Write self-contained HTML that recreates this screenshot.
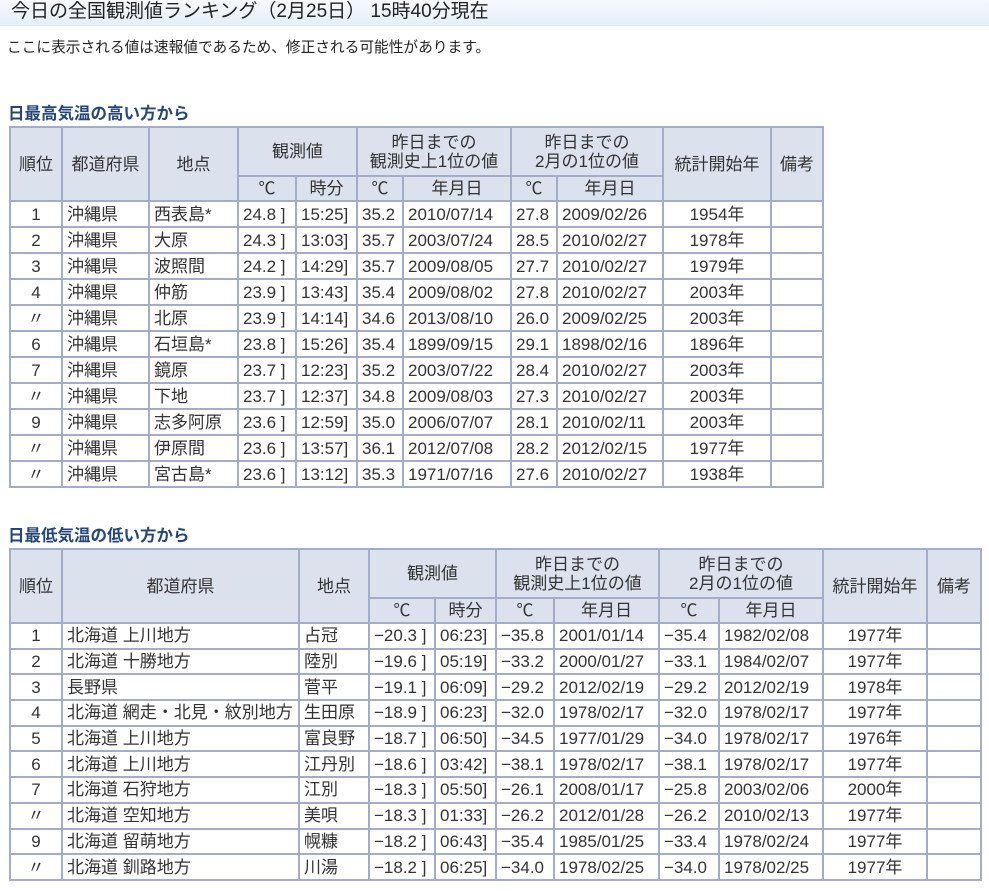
<!DOCTYPE html>
<html><head><meta charset="utf-8"><style>
body{margin:0;background:#fff;font-family:"Liberation Sans","Noto Sans CJK JP",sans-serif;color:#333;width:989px;height:895px;position:relative;overflow:hidden}
.title{position:absolute;left:0;top:0;width:989px;height:25px;background:linear-gradient(#f6f9fd,#e6eef8);border-bottom:1px solid #e0e8f2}
.title span{position:absolute;left:11px;top:0px;font-size:19px;line-height:24px;color:#222;white-space:nowrap}
.sub{position:absolute;left:7px;top:36px;font-size:14.7px;color:#222;white-space:nowrap}
h2{position:absolute;margin:0;font-size:16.5px;font-weight:bold;color:#24467a;white-space:nowrap;left:8px}
table{position:absolute;left:9px;border-collapse:collapse;table-layout:fixed;font-size:17px}
td,th{border:2px solid #a3acc9;padding:0 4px;white-space:nowrap;overflow:hidden;font-weight:normal;line-height:19px}
th{background:#dce1ee;text-align:center}
td{text-align:left}
td.c{text-align:center}
.t2 tr.d{height:25.7px}
</style></head><body>
<div class="title"><span>今日の全国観測値ランキング（2月25日） 15時40分現在</span></div>
<div class="sub">ここに表示される値は速報値であるため、修正される可能性があります。</div>
<h2 style="top:100px">日最高気温の高い方から</h2>
<table style="top:126px;width:813px">
<colgroup><col style="width:52px"><col style="width:87px"><col style="width:89px"><col style="width:58px"><col style="width:61px"><col style="width:46px"><col style="width:108px"><col style="width:46px"><col style="width:106px"><col style="width:108px"><col style="width:52px"></colgroup>
<tr style="height:49px"><th rowspan="2">順位</th><th rowspan="2">都道府県</th><th rowspan="2">地点</th><th colspan="2">観測値</th><th colspan="2">昨日までの<br>観測史上1位の値</th><th colspan="2">昨日までの<br>2月の1位の値</th><th rowspan="2">統計開始年</th><th rowspan="2">備考</th></tr>
<tr style="height:25px"><th>℃</th><th>時分</th><th>℃</th><th>年月日</th><th>℃</th><th>年月日</th></tr>
<tr style="height:26px"><td class="c">1</td><td>沖縄県</td><td>西表島*</td><td>24.8 ]</td><td>15:25]</td><td>35.2</td><td>2010/07/14</td><td>27.8</td><td>2009/02/26</td><td class="c">1954年</td><td></td></tr>
<tr style="height:26px"><td class="c">2</td><td>沖縄県</td><td>大原</td><td>24.3 ]</td><td>13:03]</td><td>35.7</td><td>2003/07/24</td><td>28.5</td><td>2010/02/27</td><td class="c">1978年</td><td></td></tr>
<tr style="height:26px"><td class="c">3</td><td>沖縄県</td><td>波照間</td><td>24.2 ]</td><td>14:29]</td><td>35.7</td><td>2009/08/05</td><td>27.7</td><td>2010/02/27</td><td class="c">1979年</td><td></td></tr>
<tr style="height:26px"><td class="c">4</td><td>沖縄県</td><td>仲筋</td><td>23.9 ]</td><td>13:43]</td><td>35.4</td><td>2009/08/02</td><td>27.8</td><td>2010/02/27</td><td class="c">2003年</td><td></td></tr>
<tr style="height:26px"><td class="c">〃</td><td>沖縄県</td><td>北原</td><td>23.9 ]</td><td>14:14]</td><td>34.6</td><td>2013/08/10</td><td>26.0</td><td>2009/02/25</td><td class="c">2003年</td><td></td></tr>
<tr style="height:26px"><td class="c">6</td><td>沖縄県</td><td>石垣島*</td><td>23.8 ]</td><td>15:26]</td><td>35.4</td><td>1899/09/15</td><td>29.1</td><td>1898/02/16</td><td class="c">1896年</td><td></td></tr>
<tr style="height:26px"><td class="c">7</td><td>沖縄県</td><td>鏡原</td><td>23.7 ]</td><td>12:23]</td><td>35.2</td><td>2003/07/22</td><td>28.4</td><td>2010/02/27</td><td class="c">2003年</td><td></td></tr>
<tr style="height:26px"><td class="c">〃</td><td>沖縄県</td><td>下地</td><td>23.7 ]</td><td>12:37]</td><td>34.8</td><td>2009/08/03</td><td>27.3</td><td>2010/02/27</td><td class="c">2003年</td><td></td></tr>
<tr style="height:26px"><td class="c">9</td><td>沖縄県</td><td>志多阿原</td><td>23.6 ]</td><td>12:59]</td><td>35.0</td><td>2006/07/07</td><td>28.1</td><td>2010/02/11</td><td class="c">2003年</td><td></td></tr>
<tr style="height:26px"><td class="c">〃</td><td>沖縄県</td><td>伊原間</td><td>23.6 ]</td><td>13:57]</td><td>36.1</td><td>2012/07/08</td><td>28.2</td><td>2012/02/15</td><td class="c">1977年</td><td></td></tr>
<tr style="height:26px"><td class="c">〃</td><td>沖縄県</td><td>宮古島*</td><td>23.6 ]</td><td>13:12]</td><td>35.3</td><td>1971/07/16</td><td>27.6</td><td>2010/02/27</td><td class="c">1938年</td><td></td></tr>
</table>
<h2 style="top:522px">日最低気温の低い方から</h2>
<table class="t2" style="top:548px;width:971px">
<colgroup><col style="width:52px"><col style="width:237px"><col style="width:70px"><col style="width:66px"><col style="width:61px"><col style="width:58px"><col style="width:105px"><col style="width:60px"><col style="width:104px"><col style="width:104px"><col style="width:54px"></colgroup>
<tr style="height:49px"><th rowspan="2">順位</th><th rowspan="2">都道府県</th><th rowspan="2">地点</th><th colspan="2">観測値</th><th colspan="2">昨日までの<br>観測史上1位の値</th><th colspan="2">昨日までの<br>2月の1位の値</th><th rowspan="2">統計開始年</th><th rowspan="2">備考</th></tr>
<tr style="height:25px"><th>℃</th><th>時分</th><th>℃</th><th>年月日</th><th>℃</th><th>年月日</th></tr>
<tr class="d"><td class="c">1</td><td>北海道 上川地方</td><td>占冠</td><td>−20.3 ]</td><td>06:23]</td><td>−35.8</td><td>2001/01/14</td><td>−35.4</td><td>1982/02/08</td><td class="c">1977年</td><td></td></tr>
<tr class="d"><td class="c">2</td><td>北海道 十勝地方</td><td>陸別</td><td>−19.6 ]</td><td>05:19]</td><td>−33.2</td><td>2000/01/27</td><td>−33.1</td><td>1984/02/07</td><td class="c">1977年</td><td></td></tr>
<tr class="d"><td class="c">3</td><td>長野県</td><td>菅平</td><td>−19.1 ]</td><td>06:09]</td><td>−29.2</td><td>2012/02/19</td><td>−29.2</td><td>2012/02/19</td><td class="c">1978年</td><td></td></tr>
<tr class="d"><td class="c">4</td><td>北海道 網走・北見・紋別地方</td><td>生田原</td><td>−18.9 ]</td><td>06:23]</td><td>−32.0</td><td>1978/02/17</td><td>−32.0</td><td>1978/02/17</td><td class="c">1977年</td><td></td></tr>
<tr class="d"><td class="c">5</td><td>北海道 上川地方</td><td>富良野</td><td>−18.7 ]</td><td>06:50]</td><td>−34.5</td><td>1977/01/29</td><td>−34.0</td><td>1978/02/17</td><td class="c">1976年</td><td></td></tr>
<tr class="d"><td class="c">6</td><td>北海道 上川地方</td><td>江丹別</td><td>−18.6 ]</td><td>03:42]</td><td>−38.1</td><td>1978/02/17</td><td>−38.1</td><td>1978/02/17</td><td class="c">1977年</td><td></td></tr>
<tr class="d"><td class="c">7</td><td>北海道 石狩地方</td><td>江別</td><td>−18.3 ]</td><td>05:50]</td><td>−26.1</td><td>2008/01/17</td><td>−25.8</td><td>2003/02/06</td><td class="c">2000年</td><td></td></tr>
<tr class="d"><td class="c">〃</td><td>北海道 空知地方</td><td>美唄</td><td>−18.3 ]</td><td>01:33]</td><td>−26.2</td><td>2012/01/28</td><td>−26.2</td><td>2010/02/13</td><td class="c">1977年</td><td></td></tr>
<tr class="d"><td class="c">9</td><td>北海道 留萌地方</td><td>幌糠</td><td>−18.2 ]</td><td>06:43]</td><td>−35.4</td><td>1985/01/25</td><td>−33.4</td><td>1978/02/24</td><td class="c">1977年</td><td></td></tr>
<tr class="d"><td class="c">〃</td><td>北海道 釧路地方</td><td>川湯</td><td>−18.2 ]</td><td>06:25]</td><td>−34.0</td><td>1978/02/25</td><td>−34.0</td><td>1978/02/25</td><td class="c">1977年</td><td></td></tr>
</table>
</body></html>
